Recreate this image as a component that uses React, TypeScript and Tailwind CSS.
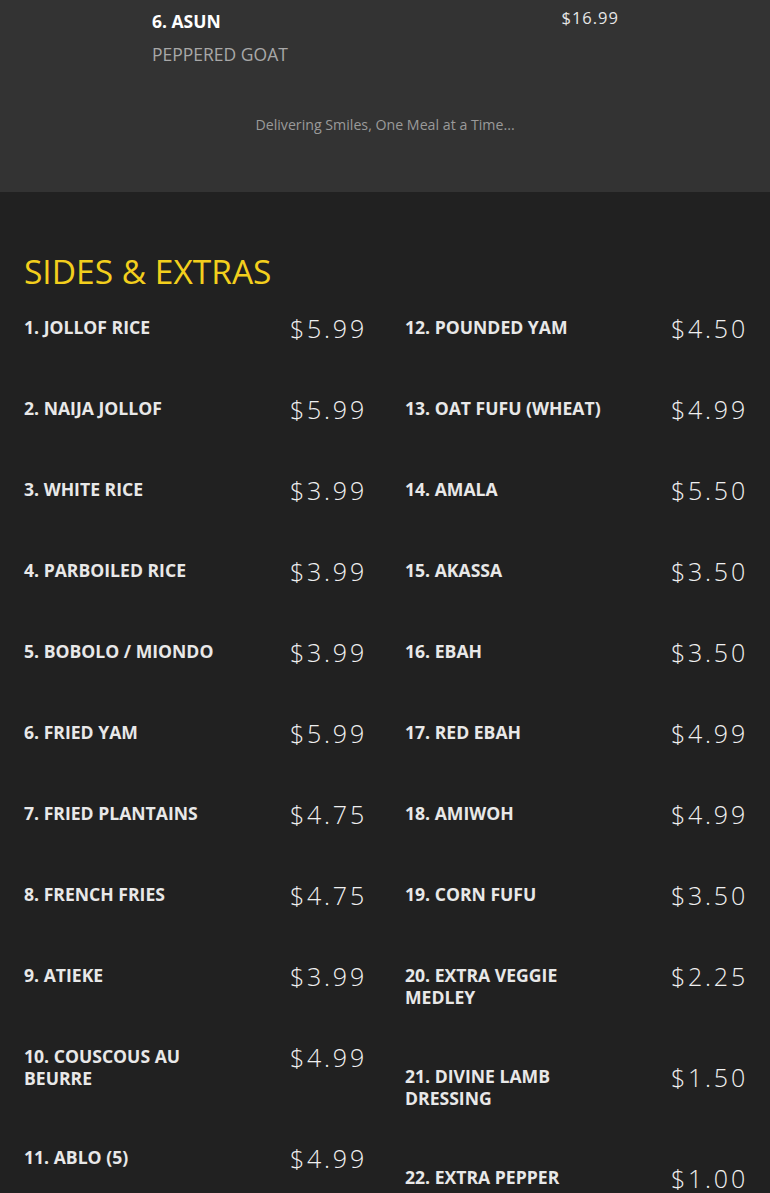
import React from "react";

const left: [string, string][] = [
  ["1. JOLLOF RICE", "$5.99"],
  ["2. NAIJA JOLLOF", "$5.99"],
  ["3. WHITE RICE", "$3.99"],
  ["4. PARBOILED RICE", "$3.99"],
  ["5. BOBOLO / MIONDO", "$3.99"],
  ["6. FRIED YAM", "$5.99"],
  ["7. FRIED PLANTAINS", "$4.75"],
  ["8. FRENCH FRIES", "$4.75"],
  ["9. ATIEKE", "$3.99"],
  ["10. COUSCOUS AU BEURRE", "$4.99"],
  ["11. ABLO (5)", "$4.99"],
];

const right: [string, string][] = [
  ["12. POUNDED YAM", "$4.50"],
  ["13. OAT FUFU (WHEAT)", "$4.99"],
  ["14. AMALA", "$5.50"],
  ["15. AKASSA", "$3.50"],
  ["16. EBAH", "$3.50"],
  ["17. RED EBAH", "$4.99"],
  ["18. AMIWOH", "$4.99"],
  ["19. CORN FUFU", "$3.50"],
  ["20. EXTRA VEGGIE MEDLEY", "$2.25"],
  ["21. DIVINE LAMB DRESSING", "$1.50"],
  ["22. EXTRA PEPPER", "$1.00"],
];

function Item({ name, price }: { name: string; price: string }) {
  return (
    <div className="flex items-start justify-between mb-[57px]">
      <div className="w-[60%] text-[17.6px] leading-[22px] font-bold text-[#e8e8e8]">
        {name}
      </div>
      <div className="text-[25px] leading-[24px] font-light tracking-[2.8px] text-[#f0f0f0] text-right -mr-[2px]">
        {price}
      </div>
    </div>
  );
}

export default function App() {
  return (
    <div className="min-h-[1193px] bg-[#212121]" style={{ fontFamily: '"Open Sans", "Noto Sans", sans-serif' }}>
      <div className="bg-[#333333] h-[192px]">
        <div className="mx-auto w-[466px] flex justify-between">
          <div>
            <div className="text-[17.5px] leading-[22px] pt-[10px] font-bold text-white">6. ASUN</div>
            <div className="text-[17.5px] leading-[22px] mt-[11px] text-[#a8a8a8]">PEPPERED GOAT</div>
          </div>
          <div className="text-[16.5px] leading-[20px] pt-[8px] text-[#e6e6e6] tracking-[1px] -mr-[1px]">$16.99</div>
        </div>
        <div className="text-center text-[14.2px] leading-[18px] mt-[51px] text-[#9a9a9a]">
          Delivering Smiles, One Meal at a Time...
        </div>
      </div>
      <div className="px-[24px] pt-[59px]">
        <h2 className="text-[33.5px] leading-[40px] text-[#f3cf1d] font-normal">SIDES &amp; EXTRAS</h2>
        <div className="grid grid-cols-2 gap-x-[40px] mt-[25px]">
          <div>
            {left.map(([n, p]) => (
              <Item key={n} name={n} price={p} />
            ))}
          </div>
          <div>
            {right.map(([n, p]) => (
              <Item key={n} name={n} price={p} />
            ))}
          </div>
        </div>
      </div>
    </div>
  );
}
